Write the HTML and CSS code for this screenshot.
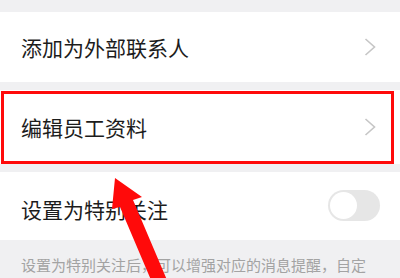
FILE: index.html
```html
<!DOCTYPE html>
<html lang="zh">
<head>
<meta charset="utf-8">
<link rel="stylesheet" href="styles.css">
</head>
<body>
<div class="page">
  <div class="band-top"></div>
  <div class="row row-1">
    <span class="label">添加为外部联系人</span>
    <svg class="chev" width="12" height="18" viewBox="0 0 12 18"><polyline points="1.5,1 10.5,9 1.5,17" fill="none" stroke="#c6c6c6" stroke-width="1.6"/></svg>
  </div>
  <div class="gap"></div>
  <div class="row row-2">
    <span class="label">编辑员工资料</span>
    <svg class="chev" width="12" height="18" viewBox="0 0 12 18"><polyline points="1.5,1 10.5,9 1.5,17" fill="none" stroke="#c6c6c6" stroke-width="1.6"/></svg>
    <div class="highlight"></div>
  </div>
  <div class="gap"></div>
  <div class="row row-3">
    <span class="label">设置为特别关注</span>
    <div class="toggle"><div class="knob"></div></div>
  </div>
  <div class="note">设置为特别关注后，可以增强对应的消息提醒，自定义提醒的铃声和振动方式等内容。<span class="link">查看详情</span></div>
  <svg class="arrow" width="400" height="278" viewBox="0 0 400 278"><polygon points="115,178 142,197 133,200 167,280 151,280 120,207 112,209" fill="#ff0a0a"/></svg>
</div>
</body>
</html>
```
FILE: styles.css
```css
* { box-sizing: border-box; }
html, body { margin: 0; padding: 0; }
body {
  width: 400px;
  height: 278px;
  overflow: hidden;
  background: #f0f0f2;
  font-family: "Noto Sans CJK SC", "Noto Sans", sans-serif;
}
.page { position: relative; width: 400px; height: 278px; overflow: hidden; }
.band-top { height: 12px; }
.gap { height: 8px; }
.row {
  position: relative;
  background: #ffffff;
  display: flex;
  align-items: center;
  padding: 0 24px 0 21px;
}
.row-1 { height: 70px; }
.row-2 { height: 74px; }
.row-3 { height: 68px; padding-right: 20px; }
.label {
  flex: 1;
  font-size: 21px;
  color: #1c1c1c;
  line-height: 1;
}
.row-3 .label { position: relative; top: 3px; }
.chev { display: block; }
.highlight {
  position: absolute;
  left: 1px;
  top: 1px;
  width: 393px;
  height: 73px;
  border: 3px solid #ff0a0a;
}
.toggle {
  width: 52px;
  height: 31px;
  border-radius: 16px;
  background: #e6e6e6;
  padding: 2px;
  position: relative;
  top: -1px;
}
.knob {
  width: 27px;
  height: 27px;
  border-radius: 50%;
  background: #ffffff;
}
.note {
  padding: 14px 20px 0 21px;
  font-size: 15px;
  line-height: 21px;
  color: #a3a3a3;
}
.link { color: #5b8fd6; }
.arrow { position: absolute; left: 0; top: 0; }
```
